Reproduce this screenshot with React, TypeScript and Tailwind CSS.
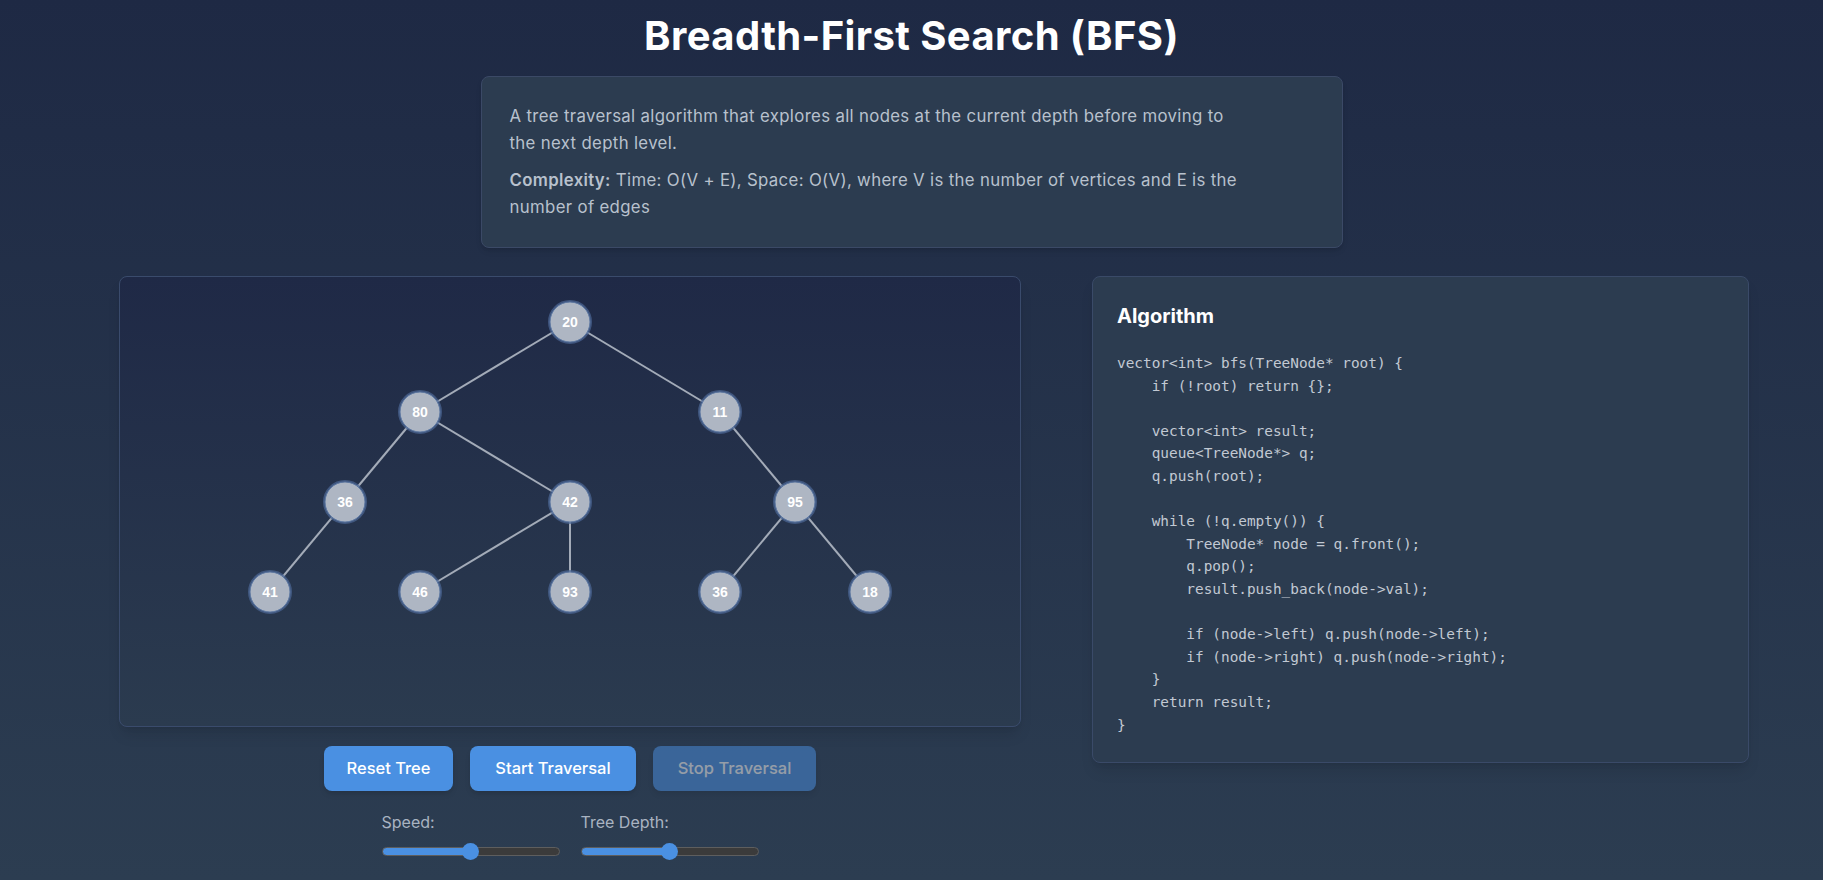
import { useState } from "react";

type TreeNode = { id: string; val: number; x: number; y: number };

const nodes: TreeNode[] = [
  { id: "a", val: 20, x: 450, y: 45 },
  { id: "b", val: 80, x: 300, y: 135 },
  { id: "c", val: 11, x: 600, y: 135 },
  { id: "d", val: 36, x: 225, y: 225 },
  { id: "e", val: 42, x: 450, y: 225 },
  { id: "f", val: 95, x: 675, y: 225 },
  { id: "g", val: 41, x: 150, y: 315 },
  { id: "h", val: 46, x: 300, y: 315 },
  { id: "i", val: 93, x: 450, y: 315 },
  { id: "j", val: 36, x: 600, y: 315 },
  { id: "k", val: 18, x: 750, y: 315 },
];

const edges: [string, string][] = [
  ["a", "b"],
  ["a", "c"],
  ["b", "d"],
  ["b", "e"],
  ["d", "g"],
  ["e", "h"],
  ["e", "i"],
  ["c", "f"],
  ["f", "j"],
  ["f", "k"],
];

const code = `vector<int> bfs(TreeNode* root) {
    if (!root) return {};

    vector<int> result;
    queue<TreeNode*> q;
    q.push(root);

    while (!q.empty()) {
        TreeNode* node = q.front();
        q.pop();
        result.push_back(node->val);

        if (node->left) q.push(node->left);
        if (node->right) q.push(node->right);
    }
    return result;
}`;

function TreeCanvas() {
  const byId = Object.fromEntries(nodes.map((n) => [n.id, n]));
  return (
    <svg width="900" height="449" viewBox="0 0 900 449" className="block">
      {edges.map(([from, to]) => (
        <line
          key={from + to}
          x1={byId[from].x}
          y1={byId[from].y}
          x2={byId[to].x}
          y2={byId[to].y}
          stroke="#a3abb8"
          strokeWidth="2"
        />
      ))}
      {nodes.map((n) => (
        <g key={n.id}>
          <circle cx={n.x} cy={n.y} r="21" fill="none" stroke="#4b6796" strokeWidth="2" opacity="0.7" />
          <circle cx={n.x} cy={n.y} r="20" fill="#aeb6c3" stroke="#5b77a3" strokeWidth="1" />
          <text
            x={n.x}
            y={n.y + 5}
            textAnchor="middle"
            fill="#ffffff"
            fontSize="14"
            fontWeight="bold"
            fontFamily="'Liberation Sans', Arial, sans-serif"
          >
            {n.val}
          </text>
        </g>
      ))}
    </svg>
  );
}

function Slider({
  label,
  value,
  min,
  max,
  onChange,
}: {
  label: string;
  value: number;
  min: number;
  max: number;
  onChange: (v: number) => void;
}) {
  const pct = ((value - min) / (max - min)) * 100;
  return (
    <label className="flex flex-col">
      <span className="leading-6">{label}</span>
      <input
        type="range"
        min={min}
        max={max}
        value={value}
        onChange={(e) => onChange(Number(e.target.value))}
        style={{ background: `linear-gradient(to right, #4a90e2 ${pct}%, #3b3b3b ${pct}%)` }}
        className="mt-[13px] h-[9px] w-[178px] cursor-pointer appearance-none rounded-full border border-[#5e5e5e] [&::-webkit-slider-thumb]:h-[17px] [&::-webkit-slider-thumb]:w-[17px] [&::-webkit-slider-thumb]:appearance-none [&::-webkit-slider-thumb]:rounded-full [&::-webkit-slider-thumb]:bg-[#4a90e2]"
      />
    </label>
  );
}

export default function App() {
  const [speed, setSpeed] = useState(50);
  const [depth, setDepth] = useState(3);

  return (
    <div className="min-h-screen bg-gradient-to-b from-[#1e2944] to-[#2c3d51] font-['Inter','Open_Sans',sans-serif] text-[#b8c1cd]">
      <h1 className="pt-3 text-center text-[40px] leading-[48px] font-bold tracking-[0.01em] text-white">
        Breadth-First Search (BFS)
      </h1>

      <div className="mx-auto mt-4 h-[172px] w-[862px] rounded-lg border border-[#3b4966] bg-[#2c3c50] px-[28px] pt-[26px] text-[16.8px] leading-[27px] tracking-[0.02em] shadow-md">
        <p className="mb-[10px]">
          A tree traversal algorithm that explores all nodes at the current depth before moving to
          <br />
          the next depth level.
        </p>
        <p>
          <strong className="font-semibold">Complexity:</strong> Time: O(V + E), Space: O(V), where V is the number of vertices and E is the
          <br />
          number of edges
        </p>
      </div>

      <div className="mt-[28px] flex gap-[71px] pl-[119px]">
        <div className="flex w-[902px] flex-col items-center">
          <div className="h-[451px] w-[902px] rounded-lg border border-[#3a4b6c] bg-gradient-to-b from-[#1f2946] to-[#2b3b4f] shadow-lg">
            <TreeCanvas />
          </div>

          <div className="mt-[19px] flex gap-[17px] text-[16.5px] font-medium text-white">
            <button className="h-[45px] w-[129px] rounded-lg bg-[#4a90e2] shadow-md">Reset Tree</button>
            <button className="h-[45px] w-[166px] rounded-lg bg-[#4a90e2] shadow-md">Start Traversal</button>
            <button disabled className="h-[45px] w-[163px] rounded-lg bg-[#4a90e2] opacity-50 shadow-md">
              Stop Traversal
            </button>
          </div>

          <div className="mt-[19px] flex gap-[21px] text-[16px] text-[#a9b3c1]">
            <Slider label="Speed:" value={speed} min={1} max={99} onChange={setSpeed} />
            <Slider label="Tree Depth:" value={depth} min={1} max={5} onChange={setDepth} />
          </div>
        </div>

        <div className="h-[487px] w-[657px] rounded-lg border border-[#3a4a68] bg-[#2c3c50] p-6 shadow-lg">
          <h2 className="text-[20px] leading-[30px] font-bold text-white">Algorithm</h2>
          <pre className="mt-[21px] font-['DejaVu_Sans_Mono','Liberation_Mono',monospace] text-[14.4px] leading-[22.6px] text-[#c2c9d3]">
            {code}
          </pre>
        </div>
      </div>
    </div>
  );
}
